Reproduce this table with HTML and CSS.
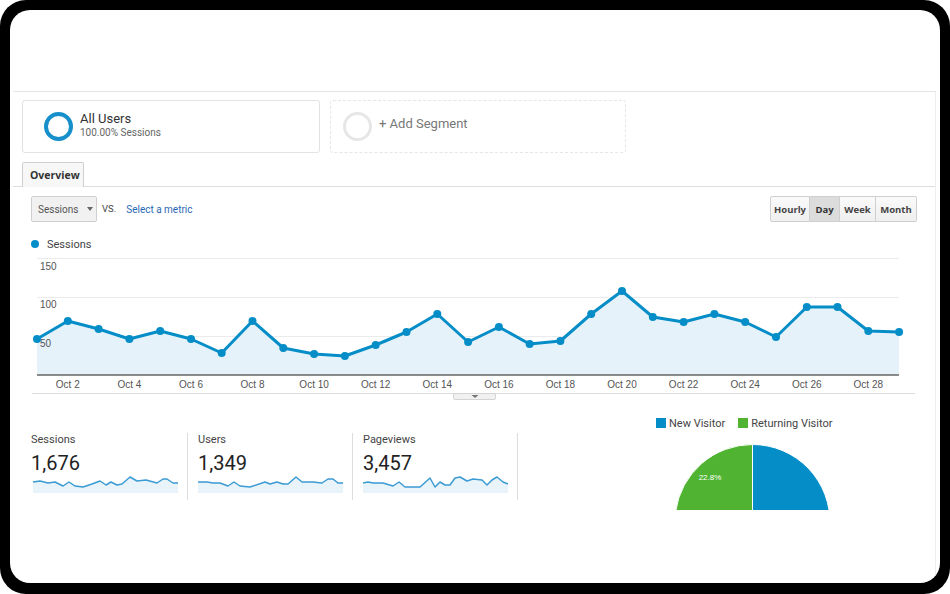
FILE: index.html
```html
<!DOCTYPE html>
<html>
<head>
<meta charset="utf-8">
<link rel="stylesheet" href="styles.css">
</head>
<body>
<div class="frame">
  <div class="screen">
    <div class="topspace"></div>
    <div class="panel">
      <div class="segments">
        <div class="seg seg-active">
          <span class="ring"></span>
          <div class="seg-text">
            <div class="seg-title">All Users</div>
            <div class="seg-sub">100.00% Sessions</div>
          </div>
        </div>
        <div class="seg seg-add">
          <span class="ring ring-gray"></span>
          <div class="seg-add-text">+ Add Segment</div>
        </div>
      </div>
      <div class="tabs"><div class="tab">Overview</div></div>
      <div class="controls">
        <div class="select">Sessions<span class="caret"></span></div>
        <span class="vs">VS.</span>
        <span class="metric-link">Select a metric</span>
        <div class="btn-group">
          <span class="btn b-hourly">Hourly</span>
          <span class="btn b-day active">Day</span>
          <span class="btn b-week">Week</span>
          <span class="btn b-month">Month</span>
        </div>
      </div>
      <div class="legend"><span class="dot"></span>Sessions</div>
      <svg class="chart" width="922" height="150" viewBox="13 252 922 150">
        <g stroke="#ebebeb" stroke-width="1">
          <line x1="37" y1="258.5" x2="899" y2="258.5"/>
          <line x1="37" y1="297.5" x2="899" y2="297.5"/>
          <line x1="37" y1="336.5" x2="899" y2="336.5"/>
        </g>
        <polygon fill="#e6f2fa" points="37,339 67.8,321 98.6,329 129.4,339 160.2,331 191,339 221.7,353 252.5,321 283.3,348 314.1,354 344.9,356 375.7,345 406.5,332 437.3,314 468.1,342 498.9,327 529.6,344 560.4,341 591.2,314 622,291 652.8,317 683.6,322 714.4,314 745.2,322 776,337 806.8,307 837.5,307 868.3,331 899.1,332 899.1,375 37,375"/>
        <g class="ylab">
          <text x="40" y="269.5">150</text>
          <text x="40" y="308">100</text>
          <text x="40" y="346.5">50</text>
        </g>
        <line x1="37" y1="375" x2="899" y2="375" stroke="#666" stroke-width="1.6"/>
        <polyline fill="none" stroke="#058dc7" stroke-width="3" stroke-linejoin="round" points="37,339 67.8,321 98.6,329 129.4,339 160.2,331 191,339 221.7,353 252.5,321 283.3,348 314.1,354 344.9,356 375.7,345 406.5,332 437.3,314 468.1,342 498.9,327 529.6,344 560.4,341 591.2,314 622,291 652.8,317 683.6,322 714.4,314 745.2,322 776,337 806.8,307 837.5,307 868.3,331 899.1,332"/>
        <g fill="#058dc7">
          <circle cx="37" cy="339" r="4"/><circle cx="67.8" cy="321" r="4"/><circle cx="98.6" cy="329" r="4"/>
          <circle cx="129.4" cy="339" r="4"/><circle cx="160.2" cy="331" r="4"/><circle cx="191" cy="339" r="4"/>
          <circle cx="221.7" cy="353" r="4"/><circle cx="252.5" cy="321" r="4"/><circle cx="283.3" cy="348" r="4"/>
          <circle cx="314.1" cy="354" r="4"/><circle cx="344.9" cy="356" r="4"/><circle cx="375.7" cy="345" r="4"/>
          <circle cx="406.5" cy="332" r="4"/><circle cx="437.3" cy="314" r="4"/><circle cx="468.1" cy="342" r="4"/>
          <circle cx="498.9" cy="327" r="4"/><circle cx="529.6" cy="344" r="4"/><circle cx="560.4" cy="341" r="4"/>
          <circle cx="591.2" cy="314" r="4"/><circle cx="622" cy="291" r="4"/><circle cx="652.8" cy="317" r="4"/>
          <circle cx="683.6" cy="322" r="4"/><circle cx="714.4" cy="314" r="4"/><circle cx="745.2" cy="322" r="4"/>
          <circle cx="776" cy="337" r="4"/><circle cx="806.8" cy="307" r="4"/><circle cx="837.5" cy="307" r="4"/>
          <circle cx="868.3" cy="331" r="4"/><circle cx="899.1" cy="332" r="4"/>
        </g>
        <g class="xlab" text-anchor="middle">
          <text x="67.8" y="388">Oct 2</text>
          <text x="129.4" y="388">Oct 4</text>
          <text x="191" y="388">Oct 6</text>
          <text x="252.5" y="388">Oct 8</text>
          <text x="314.1" y="388">Oct 10</text>
          <text x="375.7" y="388">Oct 12</text>
          <text x="437.3" y="388">Oct 14</text>
          <text x="498.9" y="388">Oct 16</text>
          <text x="560.4" y="388">Oct 18</text>
          <text x="622" y="388">Oct 20</text>
          <text x="683.6" y="388">Oct 22</text>
          <text x="745.2" y="388">Oct 24</text>
          <text x="806.8" y="388">Oct 26</text>
          <text x="868.3" y="388">Oct 28</text>
        </g>
        <line x1="32" y1="393.5" x2="915" y2="393.5" stroke="#dcdcdc" stroke-width="1"/>
        <rect x="453.5" y="393.5" width="42" height="6" rx="1.5" fill="#f1f1f1" stroke="#d4d4d4"/>
        <polygon points="471.5,395 478.5,395 475,398" fill="#777"/>
      </svg>
      <div class="bottom">
        <div class="metrics">
          <div class="metric">
            <div class="m-label">Sessions</div>
            <div class="m-value">1,676</div>
            <svg class="spark" width="148" height="18" viewBox="31 475 148 18">
              <polygon fill="#e8f3fa" points="33,482 40,481 48,483 55,482 63,486 69,482 75,486 83,487 92,484 100,481 106,485 111,482 117,485 122,484 130,477 137,481 146,480 157,483 163,479 167,479 173,483 178,483 178,493 33,493"/>
              <polyline fill="none" stroke="#3b9bd3" stroke-width="1.5" stroke-linejoin="round" points="33,482 40,481 48,483 55,482 63,486 69,482 75,486 83,487 92,484 100,481 106,485 111,482 117,485 122,484 130,477 137,481 146,480 157,483 163,479 167,479 173,483 178,483"/>
            </svg>
          </div>
          <div class="metric">
            <div class="m-label">Users</div>
            <div class="m-value">1,349</div>
            <svg class="spark" width="147" height="18" viewBox="198 475 147 18">
              <polygon fill="#e8f3fa" points="198,482 207,482 213,483 220,483 228,486 234,482 240,486 250,487 265,482 270,484 277,482 283,484 288,484 296,477 302,482 313,482 322,483 328,479 333,479 338,483 343,483 343,493 198,493"/>
              <polyline fill="none" stroke="#3b9bd3" stroke-width="1.5" stroke-linejoin="round" points="198,482 207,482 213,483 220,483 228,486 234,482 240,486 250,487 265,482 270,484 277,482 283,484 288,484 296,477 302,482 313,482 322,483 328,479 333,479 338,483 343,483"/>
            </svg>
          </div>
          <div class="metric">
            <div class="m-label">Pageviews</div>
            <div class="m-value">3,457</div>
            <svg class="spark" width="147" height="18" viewBox="363 475 147 18">
              <polygon fill="#e8f3fa" points="363,483 368,482 373,483 383,483 393,486 399,482 405,487 420,487 430,478 435,487 440,482 445,485 450,485 455,478 460,477 467,481 473,479 482,480 487,485 492,480 497,477 503,482 508,484 508,493 363,493"/>
              <polyline fill="none" stroke="#3b9bd3" stroke-width="1.5" stroke-linejoin="round" points="363,483 368,482 373,483 383,483 393,486 399,482 405,487 420,487 430,478 435,487 440,482 445,485 450,485 455,478 460,477 467,481 473,479 482,480 487,485 492,480 497,477 503,482 508,484"/>
            </svg>
          </div>
        </div>
        <div class="pie-box">
          <div class="pie-legend">
            <span class="sq sq-blue"></span><span>New Visitor</span>
            <span class="sq sq-green"></span><span>Returning Visitor</span>
          </div>
          <svg class="pie" width="230" height="80" viewBox="640 430 230 80">
            <path d="M752.5,522 L752.5,444.5 A77.5,77.5 0 1 1 675.7,511.35 Z" fill="#058dc7" stroke="#fff" stroke-width="1"/>
            <path d="M752.5,522 L675.7,511.35 A77.5,77.5 0 0 1 752.5,444.5 Z" fill="#50b432" stroke="#fff" stroke-width="1"/>
            <text x="710" y="480" class="pie-label" text-anchor="middle">22.8%</text>
          </svg>
        </div>
      </div>
    </div>
  </div>
</div>
</body>
</html>
```

FILE: styles.css
```css
html, body {
  margin: 0;
  padding: 0;
  background: #fff;
}

.frame {
  width: 950px;
  height: 594px;
  box-sizing: border-box;
  background: #000;
  border-radius: 26px;
  padding: 10px 10px 11px 10px;
}

.screen {
  height: 573px;
  background: #fff;
  border-radius: 20px;
  overflow: hidden;
  font-family: Roboto, "Liberation Sans", Arial, sans-serif;
  color: #333;
}

.topspace {
  height: 81px;
}

.panel {
  margin-left: 3px;
  width: 923px;
  box-sizing: border-box;
  border-top: 1px solid #e4e4e4;
  border-right: 1px solid #eeeeee;
  height: 492px;
}

/* segments */
.segments {
  display: flex;
  gap: 10px;
  padding: 8px 0 0 9px;
}

.seg {
  height: 53px;
  box-sizing: border-box;
  border-radius: 3px;
  display: flex;
  align-items: center;
}

.seg-active {
  width: 298px;
  border: 1px solid #e2e2e2;
  padding-left: 21px;
}

.seg-add {
  width: 296px;
  border: 1px dashed #e6e6e6;
  padding-left: 12px;
}

.ring {
  flex: none;
  width: 29px;
  height: 29px;
  box-sizing: border-box;
  border: 4px solid #168fcb;
  border-radius: 50%;
}

.ring-gray {
  border: 3px solid #e6e6e6;
}

.seg-text {
  margin-left: 7px;
  margin-top: -3px;
}

.seg-title {
  font-size: 13px;
  line-height: 15px;
  color: #333;
}

.seg-sub {
  font-size: 10px;
  line-height: 12px;
  color: #666;
  margin-top: 1px;
}

.seg-add-text {
  margin-left: 7px;
  margin-bottom: 7px;
  font-size: 13px;
  color: #777;
}

/* tabs */
.tabs {
  margin-top: 9px;
  height: 24px;
  border-bottom: 1px solid #dddddd;
  padding-left: 9px;
  display: flex;
  align-items: flex-end;
}

.tab {
  width: 62px;
  height: 25px;
  box-sizing: border-box;
  border: 1px solid #d0d0d0;
  border-bottom: none;
  border-radius: 2px 2px 0 0;
  background: #f7f7f7;
  margin-bottom: -1px;
  padding-left: 7px;
  font-family: "Open Sans", "Liberation Sans", Arial, sans-serif;
  font-weight: 700;
  font-size: 10.5px;
  line-height: 24px;
  color: #333;
}

/* controls */
.controls {
  margin-top: 9px;
  height: 26px;
  display: flex;
  align-items: center;
  padding: 0 18px 0 18px;
}

.select {
  width: 66px;
  height: 26px;
  box-sizing: border-box;
  border: 1px solid #cfcfcf;
  border-radius: 2px;
  background: #f1f1f1;
  display: flex;
  align-items: center;
  padding-left: 6px;
  font-size: 10px;
  color: #555;
}

.caret {
  margin-left: 9px;
  width: 0;
  height: 0;
  border-left: 3.5px solid transparent;
  border-right: 3.5px solid transparent;
  border-top: 4px solid #666;
}

.vs {
  margin-left: 5px;
  margin-top: -2px;
  font-size: 9.5px;
  color: #444;
}

.metric-link {
  margin-left: 10px;
  font-size: 10px;
  color: #2a68b5;
}

.btn-group {
  margin-left: auto;
  display: flex;
}

.btn {
  height: 26px;
  box-sizing: border-box;
  border: 1px solid #cfcfcf;
  border-left: none;
  background: linear-gradient(#fafafa, #efefef);
  display: flex;
  align-items: center;
  justify-content: center;
  font-family: "Open Sans", "Liberation Sans", Arial, sans-serif;
  font-weight: 700;
  font-size: 9.5px;
  color: #444;
}

.b-hourly {
  width: 40px;
  border-left: 1px solid #cfcfcf;
  border-radius: 2px 0 0 2px;
}

.b-day { width: 30px; }
.b-week { width: 36px; }
.b-month {
  width: 41px;
  border-radius: 0 2px 2px 0;
}

.btn.active {
  background: #dcdcdc;
  color: #333;
}

/* legend */
.legend {
  margin-top: 15px;
  height: 14px;
  padding-left: 18px;
  display: flex;
  align-items: center;
  font-size: 11px;
  color: #444;
}

.dot {
  width: 8px;
  height: 8px;
  border-radius: 50%;
  background: #058dc7;
  margin-right: 8px;
}

/* chart */
.chart {
  display: block;
  margin-top: 1px;
}

.ylab text,
.xlab text {
  font-family: "Liberation Sans", Arial, sans-serif;
  font-size: 10px;
  fill: #555;
}

/* bottom */
.bottom {
  display: flex;
}

.metrics {
  display: flex;
  padding-left: 18px;
  margin-top: 31px;
  align-self: flex-start;
}

.metric {
  width: 154px;
  padding-left: 10px;
  padding-bottom: 7px;
  border-right: 1px solid #dddddd;
}

.metric:first-child {
  padding-left: 0;
  width: 156px;
}

.m-label {
  font-size: 11px;
  line-height: 13px;
  color: #444;
}

.m-value {
  margin-top: 5px;
  font-size: 20px;
  line-height: 24px;
  color: #222;
}

.spark {
  display: block;
}

.pie-box {
  margin-left: 122px;
  width: 230px;
  padding-top: 15px;
}

.pie-legend {
  height: 12px;
  display: flex;
  align-items: center;
  padding-left: 16px;
  font-size: 11px;
  color: #444;
}

.sq {
  width: 10px;
  height: 10px;
  margin-right: 3px;
}

.sq-blue { background: #058dc7; }
.sq-green {
  background: #50b432;
  margin-left: 13px;
}

.pie {
  display: block;
  margin-top: 1px;
}

.pie-label {
  font-family: "Liberation Sans", Arial, sans-serif;
  font-size: 8px;
  fill: #fff;
}
```
